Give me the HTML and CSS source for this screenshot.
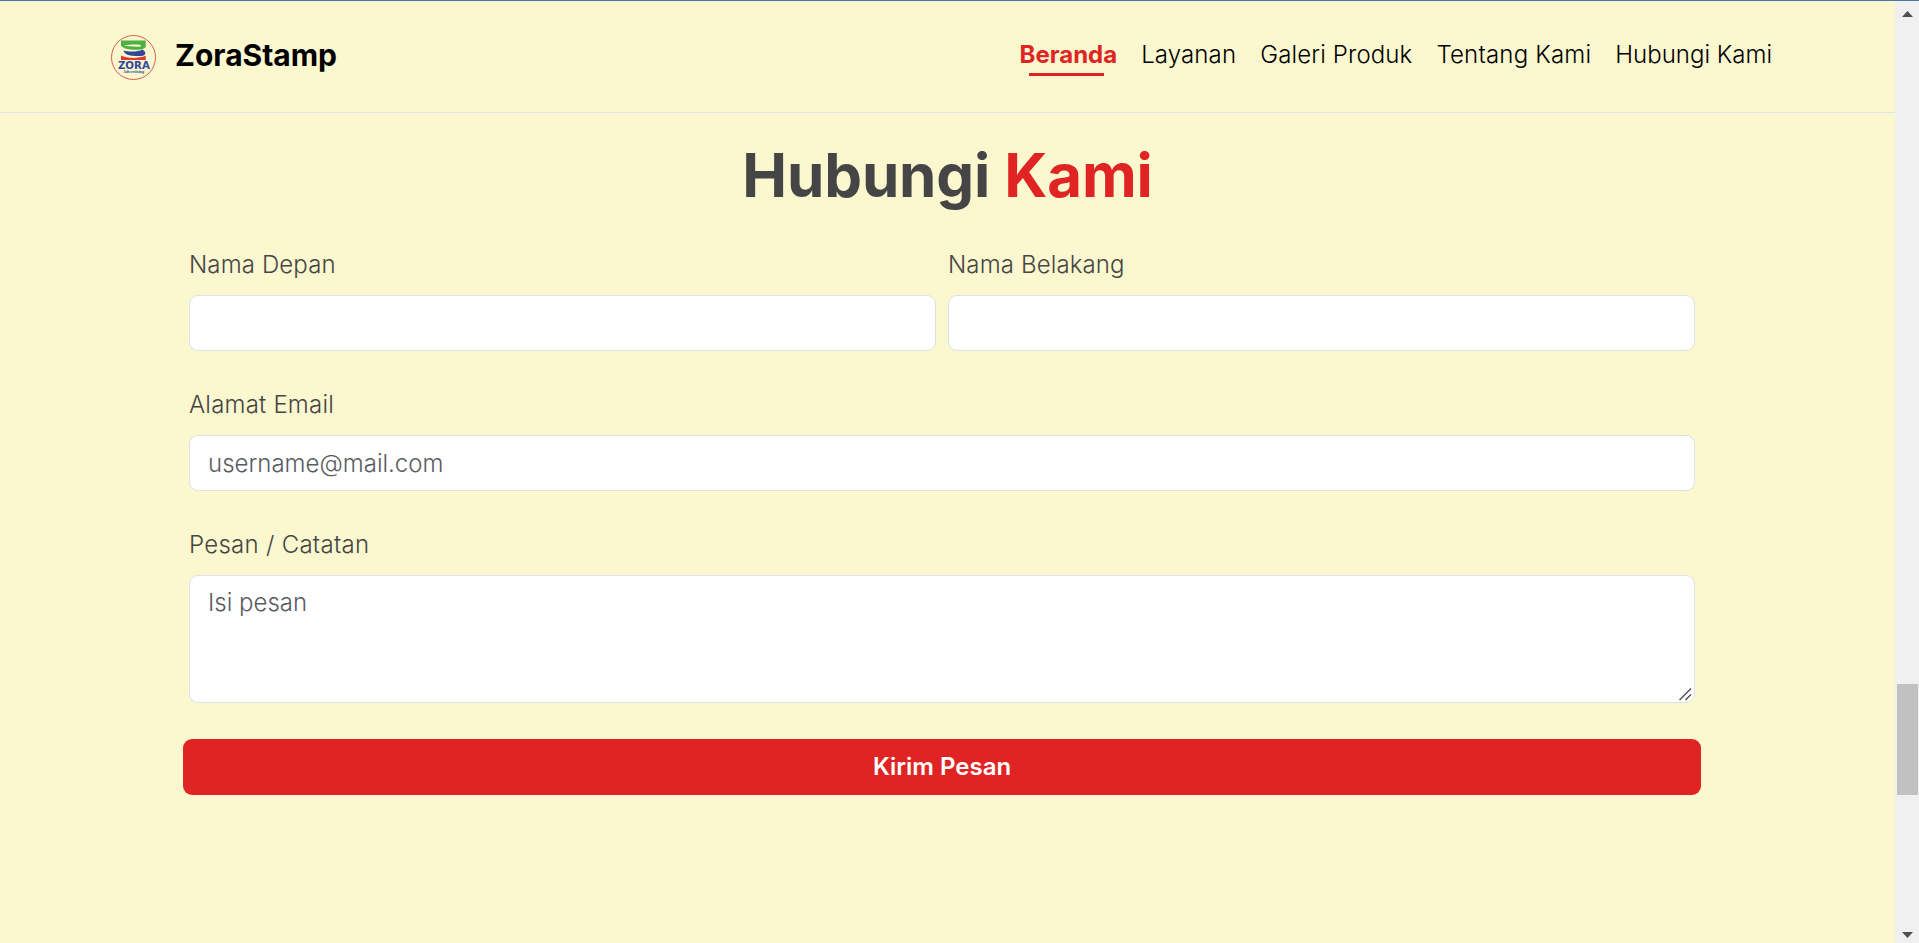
FILE: index.html
```html
<!DOCTYPE html>
<html lang="id">
<head>
<meta charset="utf-8">
<title>ZoraStamp</title>
<link rel="stylesheet" href="styles.css">
</head>
<body>
<div class="window">
  <div class="page">
    <header class="navbar">
      <a class="brand">
        <svg class="logo" viewBox="0 0 45 45" width="45" height="45">
          <circle cx="22.5" cy="22.5" r="22" fill="none" stroke="#d9604e" stroke-width="1"/>
          <path d="M10 5.500H34.700V12C33 14 30 14.800 24 14.800C18 14.800 12 13.500 10 10.500Z" fill="#4fb043"/>
          <path d="M12.500 10.800C17 9.700 24 9.300 28.500 9.700C30.500 10 30.500 11.500 28.500 11.700C23 12 17 11.200 12.500 10.800Z" fill="#fbf7ce"/>
          <path d="M12.500 15.500C18 17.200 27 17 31.500 14.500C35.500 17 35.500 20.500 30 21C22 21.500 13.500 20.500 12.500 15.500Z" fill="#31479b"/>
          <path d="M10 20.500C15 23.300 27 24 34.700 20.800V25H10Z" fill="#df3a2c"/>
          <text x="22.900" y="33.800" class="logo-name" text-anchor="middle" textLength="32" lengthAdjust="spacingAndGlyphs">ZORA</text>
          <text x="22.500" y="38.300" class="logo-sub" text-anchor="middle" textLength="21" lengthAdjust="spacingAndGlyphs">Advertising</text>
        </svg>
        <span class="brand-name">ZoraStamp</span>
      </a>
      <nav class="menu">
        <a class="link active">Beranda</a>
        <a class="link spaced">Layanan</a>
        <a class="link spaced">Galeri Produk</a>
        <a class="link loose">Tentang Kami</a>
        <a class="link">Hubungi Kami</a>
      </nav>
    </header>
    <main class="contact">
      <h1 class="title">Hubungi <span class="accent">Kami</span></h1>
      <form class="form">
        <div class="names">
          <div class="field"><label class="label spaced" for="first">Nama Depan</label><input class="control" id="first" type="text"></div>
          <div class="field"><label class="label spaced" for="last">Nama Belakang</label><input class="control" id="last" type="text"></div>
        </div>
        <div class="field inset"><label class="label loose" for="email">Alamat Email</label><input class="control" id="email" type="email" placeholder="username@mail.com"></div>
        <div class="field inset">
          <label class="label looser" for="message">Pesan / Catatan</label>
          <div class="message-box">
            <textarea class="control message" id="message" placeholder="Isi pesan"></textarea>
            <svg class="grip" width="13" height="13" viewBox="0 0 13 13"><path d="M0.500 12L12 0.500M6.500 12L12 6.500" stroke="#555" stroke-width="1.500"/></svg>
          </div>
        </div>
        <button class="submit" type="button">Kirim Pesan</button>
      </form>
    </main>
  </div>
  <div class="scrollbar">
    <svg width="11" height="6" viewBox="0 0 11 6"><path d="M0 6L5.500 0L11 6Z" fill="#505050"/></svg>
    <div class="thumb"></div>
    <svg class="down" width="11" height="6" viewBox="0 0 11 6"><path d="M0 0L5.500 6L11 0Z" fill="#505050"/></svg>
  </div>
</div>
</body>
</html>
```
FILE: styles.css
```css
* { box-sizing: border-box; }
body {
  margin: 0;
  overflow: hidden;
  background: #fbf7ce;
  color: #454545;
  font: 300 24px/36px Inter, sans-serif;
}
.window {
  display: flex;
  height: 943px;
  border-top: 1px solid #4878a8;
}
.page { flex: 1; }
.navbar {
  display: flex;
  justify-content: space-between;
  height: 112px;
  padding: 32px 111px 0;
  border-bottom: 1px solid #dee2e6;
  color: #000;
}
.brand { display: flex; align-items: flex-start; gap: 19px; }
.logo { margin-top: 2px; }
.logo-name { font: 900 10px "DejaVu Sans", sans-serif; fill: #31479b; }
.logo-sub { font: 700 5px "Liberation Serif", serif; fill: #31479b; }
.brand-name { font-size: 30px; font-weight: 700; line-height: 45px; }
.menu { display: flex; gap: 24px; padding: 4px 12px 0 0; }
.link { position: relative; height: 36px; white-space: nowrap; }
.spaced { letter-spacing: 0.13px; }
.loose { letter-spacing: 0.2px; }
.looser { letter-spacing: 0.28px; }
.active { color: #e02424; font-weight: 700; }
.active::after {
  content: "";
  position: absolute;
  left: 9px;
  top: 36px;
  width: 75px;
  height: 3px;
  background: #e02424;
}
.title {
  margin: 26px 0 36px;
  font-size: 60px;
  font-weight: 700;
  line-height: 72px;
  letter-spacing: -0.15px;
  text-align: center;
}
.accent { color: #e02424; }
.form {
  display: flex;
  flex-direction: column;
  gap: 36px;
  width: 1518px;
  margin-left: 183px;
}
.names { display: grid; grid-template-columns: 1fr 1fr; gap: 12px; padding: 0 6px; }
.inset { padding: 0 6px; }
.field { display: flex; flex-direction: column; gap: 12px; }
.control {
  display: block;
  width: 100%;
  height: 56px;
  padding: 9px 18px;
  border: 1px solid #dee2e6;
  border-radius: 9px;
  background: #fff;
  color: #454545;
  font: inherit;
}
.control::placeholder { color: #595c5f; opacity: 1; }
.message-box { position: relative; }
.message { height: 128px; resize: none; }
.grip { position: absolute; right: 3px; bottom: 2px; }
.submit {
  height: 56px;
  padding: 0;
  border: 0;
  border-radius: 9px;
  background: #e02424;
  color: #fff;
  font: 600 24px/36px Inter, sans-serif;
}
.scrollbar {
  display: flex;
  flex-direction: column;
  align-items: center;
  width: 24px;
  padding: 10px 0 5px;
  background: #f0f0f0;
}
.thumb { width: 21px; height: 111px; margin-top: 667px; background: #c1c1c1; }
.down { margin-top: auto; }
```
